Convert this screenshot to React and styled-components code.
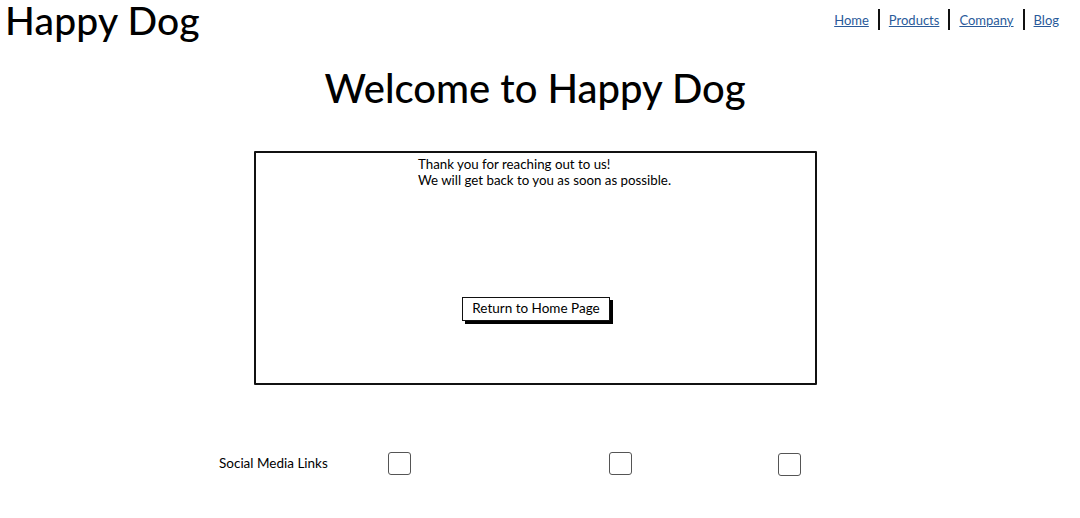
import React from "react";
import styled, { createGlobalStyle } from "styled-components";

const Global = createGlobalStyle`
  html, body { margin: 0; padding: 0; background: #fff; }
  body { font-family: "Lato", "Noto Sans", sans-serif; color: #000; }
`;

const Page = styled.div`
  width: 1080px;
  height: 518px;
  position: relative;
  overflow: hidden;
`;

const Header = styled.header`
  display: flex;
  justify-content: space-between;
  align-items: flex-start;
  padding: 0 21px 0 5px;
  height: 48px;
`;

const Logo = styled.div`
  font-size: 39px;
  font-weight: 500;
  line-height: 44px;
  margin-top: -2px;
  letter-spacing: 0.2px;
`;

const Nav = styled.nav`
  display: flex;
  align-items: center;
  gap: 9px;
  margin-top: 9px;
  font-size: 13px;
`;

const NavLink = styled.a`
  color: #2a5a9a;
  text-decoration: underline;
  cursor: pointer;
`;

const Sep = styled.span`
  display: inline-block;
  width: 2px;
  height: 21px;
  background: #111;
`;

const Title = styled.h1`
  margin: 16px 0 0;
  text-align: center;
  font-size: 40px;
  font-weight: 500;
  line-height: 48px;
  padding-right: 10px;
`;

const Card = styled.section`
  box-sizing: border-box;
  width: 563px;
  height: 234px;
  margin: 39px 0 0 254px;
  border: 2px solid #111;
  border-radius: 1px;
  display: flex;
  flex-direction: column;
  padding: 3px 0 0 162px;
`;

const Message = styled.p`
  margin: 0;
  font-size: 13.3px;
  line-height: 16px;
`;

const ButtonRow = styled.div`
  margin: 109px 0 0 -162px;
  display: flex;
  justify-content: center;
`;

const Button = styled.button`
  font-family: inherit;
  font-size: 13.5px;
  background: #fff;
  color: #000;
  border: 1.5px solid #111;
  box-shadow: 3px 3px 0 #000;
  padding: 2px 9px 3px 9px;
  height: 24px;
  line-height: 17px;
  margin-left: 1px;
  cursor: pointer;
`;

const Footer = styled.footer`
  display: grid;
  grid-template-columns: 169px 221px 169px 22px;
  align-items: center;
  margin: 65px 0 0 219px;
`;

const Label = styled.span`
  font-size: 13.5px;
`;

const Check = styled.span`
  display: block;
  box-sizing: border-box;
  width: 23px;
  height: 23px;
  border: 1.5px solid #555;
  border-radius: 3px;
  margin-top: ${(p) => p.$dy || 0}px;
`;

export default function App() {
  return (
    <Page>
      <Global />
      <Header>
        <Logo>Happy Dog</Logo>
        <Nav>
          <NavLink>Home</NavLink>
          <Sep />
          <NavLink>Products</NavLink>
          <Sep />
          <NavLink>Company</NavLink>
          <Sep />
          <NavLink>Blog</NavLink>
        </Nav>
      </Header>
      <Title>Welcome to Happy Dog</Title>
      <Card>
        <Message>
          Thank you for reaching out to us!
          <br />
          We will get back to you as soon as possible.
        </Message>
        <ButtonRow>
          <Button>Return to Home Page</Button>
        </ButtonRow>
      </Card>
      <Footer>
        <Label>Social Media Links</Label>
        <Check />
        <Check />
        <Check $dy={3} />
      </Footer>
    </Page>
  );
}
